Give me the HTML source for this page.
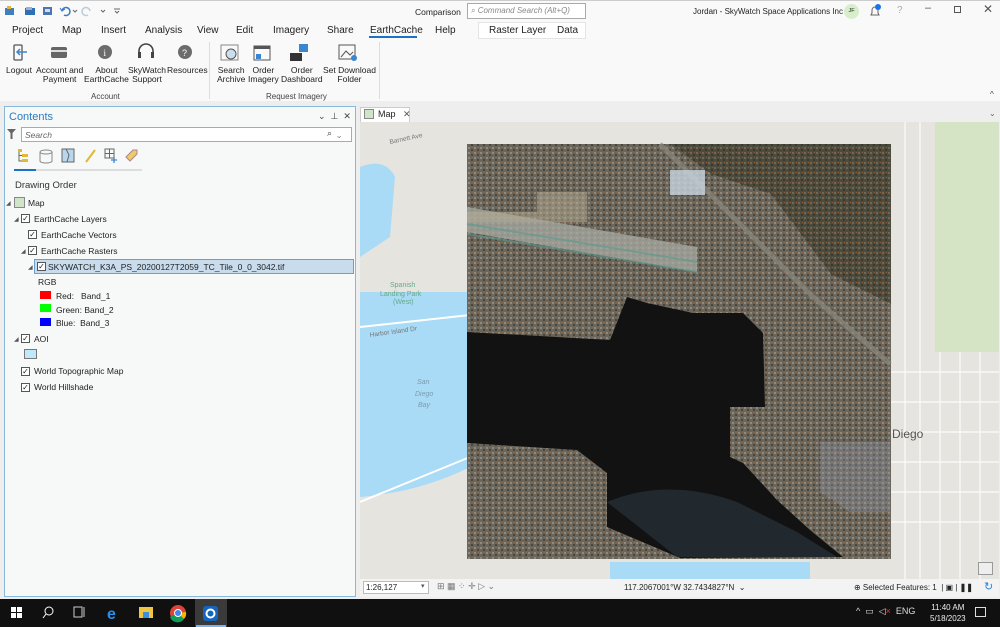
<!DOCTYPE html>
<html><head><meta charset="utf-8">
<style>
*{margin:0;padding:0;box-sizing:border-box}
body{width:1000px;height:627px;overflow:hidden;background:#eeeeee;font-family:"Liberation Sans",sans-serif;font-size:9px;color:#222;position:relative}
.a{position:absolute;white-space:nowrap}
.tab{position:absolute;top:25px;font-size:10px;color:#222}
.rb{position:absolute;top:66px;font-size:8.5px;text-align:center;line-height:9px;color:#222}
.ico{position:absolute}
.cb{position:absolute;width:9px;height:9px;border:1px solid #555;background:#fff;font-size:8px;line-height:7px;text-align:center;color:#222}
.tri{position:absolute;font-size:6px;color:#555}
.tl{position:absolute;font-size:8.5px;color:#222}
</style></head><body>
<div class="a" style="left:0;top:0;width:1000px;height:101px;background:#f9f9f9;border-top:1px solid #ccc"></div>
<svg class="ico" style="left:4px;top:5px" width="120" height="12">
<rect x="1" y="3" width="9" height="7" fill="#3d7fc1"/><rect x="3" y="1" width="4" height="3" fill="#e7b23c"/>
<rect x="21" y="3" width="10" height="7" fill="#2f6fb4"/><rect x="22" y="2" width="6" height="3" fill="#aac"/>
<rect x="39" y="2" width="9" height="8" fill="#4a76b8"/><rect x="41" y="4" width="5" height="3" fill="#ddd"/>
<path d="M58 6 a4 4 0 1 1 2 4" stroke="#3b7ac0" fill="none" stroke-width="1.5"/><path d="M56 3 l2 3 l3-2" stroke="#3b7ac0" fill="none"/>
<path d="M69 5 l2 2 l2-2" stroke="#666" fill="none"/>
<path d="M86 6 a4 4 0 1 0 -2 4" stroke="#bcd" fill="none" stroke-width="1.5"/>
<path d="M97 5 l2 2 l2-2" stroke="#666" fill="none"/>
<path d="M110 4 h6 M111 6 l2 2 l2-2" stroke="#666" fill="none"/>
</svg>
<div class="a" style="left:415px;top:7px;font-size:8.5px">Comparison</div>
<div class="a" style="left:467px;top:3px;width:119px;height:16px;border:1px solid #aaa;background:#fff"></div>
<div class="a" style="left:471px;top:6px;font-size:8px;color:#888">⌕ <i>Command Search (Alt+Q)</i></div>
<div class="a" style="left:693px;top:7px;font-size:8px">Jordan - SkyWatch Space Applications Inc</div>
<div class="a" style="left:844px;top:4px;width:15px;height:15px;border-radius:50%;background:#d6eec9;font-size:5.5px;text-align:center;line-height:15px">JF</div>
<svg class="ico" style="left:868px;top:3px" width="14" height="16"><path d="M3 12 h8 l-1-2 v-3 a3 3 0 0 0 -6 0 v3 z" fill="none" stroke="#666"/><circle cx="10" cy="4" r="3" fill="#1a73e8"/></svg>
<div class="a" style="left:897px;top:5px;color:#aaa;font-size:10px">?</div>
<div class="a" style="left:925px;top:2px;color:#555;font-size:11px">–</div>
<div class="a" style="left:954px;top:6px;width:7px;height:7px;border:1px solid #555"></div>
<div class="a" style="left:983px;top:2px;color:#555;font-size:12px">✕</div>

<div class="tab" style="left:12px">Project</div>
<div class="tab" style="left:62px">Map</div>
<div class="tab" style="left:101px">Insert</div>
<div class="tab" style="left:145px">Analysis</div>
<div class="tab" style="left:197px">View</div>
<div class="tab" style="left:236px">Edit</div>
<div class="tab" style="left:273px">Imagery</div>
<div class="tab" style="left:327px">Share</div>
<div class="tab" style="left:370px">EarthCache</div>
<div class="a" style="left:369px;top:36px;width:48px;height:2px;background:#1a73c8"></div>
<div class="tab" style="left:435px">Help</div>
<div class="a" style="left:478px;top:22px;width:108px;height:17px;background:#fff;border:1px solid #e4e4e4"></div>
<div class="tab" style="left:489px">Raster Layer</div>
<div class="tab" style="left:557px">Data</div>

<svg class="ico" style="left:0;top:42px" width="380" height="24">
<rect x="14" y="3" width="8" height="15" rx="1" fill="none" stroke="#555" stroke-width="1.3"/><path d="M27 10 h-10 m3-3 l-3 3 l3 3" stroke="#3a86d1" stroke-width="1.5" fill="none"/>
<rect x="51" y="5" width="16" height="11" rx="2" fill="#666"/><rect x="51" y="8" width="16" height="2" fill="#ddd"/>
<circle cx="105" cy="10" r="7" fill="#6c6c6c"/><text x="103.5" y="14" font-size="9" fill="#fff" font-family="Liberation Serif">i</text>
<path d="M139 13 v-4 a7 7 0 0 1 14 0 v4" stroke="#444" stroke-width="1.6" fill="none"/><rect x="138" y="10" width="3" height="6" fill="#444"/><rect x="151" y="10" width="3" height="6" fill="#444"/>
<circle cx="185" cy="10" r="7" fill="#6c6c6c"/><text x="182" y="14" font-size="9" fill="#fff">?</text>
<rect x="221" y="3" width="17" height="15" fill="none" stroke="#888"/><circle cx="231" cy="12" r="5" fill="#cde" stroke="#555"/>
<rect x="254" y="4" width="16" height="14" fill="none" stroke="#555"/><rect x="254" y="4" width="16" height="3" fill="#555"/><rect x="256" y="12" width="5" height="5" fill="#3a86d1"/>
<rect x="290" y="11" width="12" height="8" fill="#333"/><rect x="299" y="2" width="9" height="8" fill="#3a86d1"/>
<rect x="339" y="3" width="16" height="14" fill="none" stroke="#555"/><path d="M341 15 l5-6 l4 4 l3-3" stroke="#555" fill="none"/><circle cx="354" cy="16" r="3" fill="#3a86d1"/>
</svg>
<div class="rb" style="left:6px">Logout</div>
<div class="rb" style="left:36px">Account and<br>Payment</div>
<div class="rb" style="left:84px">About<br>EarthCache</div>
<div class="rb" style="left:128px">SkyWatch<br>Support</div>
<div class="rb" style="left:167px">Resources</div>
<div class="rb" style="left:217px">Search<br>Archive</div>
<div class="rb" style="left:248px">Order<br>Imagery</div>
<div class="rb" style="left:281px">Order<br>Dashboard</div>
<div class="rb" style="left:323px">Set Download<br>Folder</div>
<div class="a" style="left:91px;top:92px;font-size:8px;color:#444">Account</div>
<div class="a" style="left:266px;top:92px;font-size:8px;color:#444">Request Imagery</div>
<div class="a" style="left:209px;top:42px;width:1px;height:57px;background:#ddd"></div>
<div class="a" style="left:379px;top:42px;width:1px;height:57px;background:#ddd"></div>
<div class="a" style="left:990px;top:90px;font-size:8px;color:#444">^</div>

<div class="a" style="left:4px;top:106px;width:352px;height:491px;background:#f7f8f8;border:1px solid #8ab8dc"></div>
<div class="a" style="left:9px;top:111px;font-size:11px;color:#2a7cc2">Contents</div>
<div class="a" style="left:318px;top:111px;font-size:9px;color:#444">⌄ &nbsp;⊥ &nbsp;✕</div>
<svg class="ico" style="left:7px;top:129px" width="10" height="11"><path d="M0 0 h9 l-3.5 4 v6 h-2 v-6 z" fill="#666"/></svg>
<div class="a" style="left:21px;top:127px;width:331px;height:15px;background:#fff;border:1px solid #aaa"></div>
<div class="a" style="left:25px;top:130px;font-size:8.5px;color:#666;font-style:italic">Search</div>
<div class="a" style="left:327px;top:128px;font-size:9px;color:#444">⌕ &nbsp;⌄</div>
<svg class="ico" style="left:14px;top:147px" width="130" height="20">
<rect x="4" y="2" width="4" height="3" fill="#e2b835"/><rect x="8" y="7" width="6" height="3" fill="#e2b835"/><rect x="8" y="12" width="6" height="3" fill="#e2b835"/><path d="M5 5 v9 h3 M5 8.5 h3" stroke="#666" fill="none"/>
<ellipse cx="32" cy="5" rx="6" ry="2" fill="none" stroke="#888"/><path d="M26 5 v9 a6 2 0 0 0 12 0 v-9" fill="none" stroke="#888"/>
<rect x="48" y="2" width="12" height="13" fill="#b8d6ec" stroke="#666"/><path d="M52 2 l3 6 l-2 7" stroke="#666" fill="none"/>
<path d="M72 15 l9-12" stroke="#e2b835" stroke-width="2"/>
<path d="M91 2 h9 v9 h-9 z M95.5 2 v9 M91 6.5 h9" stroke="#666" fill="none"/><path d="M100 10 v6 M97 13 h6" stroke="#3a86d1" stroke-width="1.3"/>
<path d="M112 10 l7-7 h4 v4 l-7 7 z" fill="#f0c96a" stroke="#a88"/>
</svg>
<div class="a" style="left:14px;top:169px;width:128px;height:2px;background:#ddd"></div>
<div class="a" style="left:14px;top:169px;width:22px;height:2px;background:#1a73c8"></div>
<div class="a" style="left:15px;top:180px;font-size:9.5px;color:#333">Drawing Order</div>

<div class="tri" style="left:6px;top:200px">◢</div>
<div class="a" style="left:14px;top:197px;width:11px;height:11px;border:1px solid #888;background:#cfe4c9"></div>
<div class="tl" style="left:28px;top:198px">Map</div>
<div class="tri" style="left:14px;top:216px">◢</div><div class="cb" style="left:21px;top:214px">✓</div><div class="tl" style="left:34px;top:214px">EarthCache Layers</div>
<div class="cb" style="left:28px;top:230px">✓</div><div class="tl" style="left:41px;top:230px">EarthCache Vectors</div>
<div class="tri" style="left:21px;top:248px">◢</div><div class="cb" style="left:28px;top:246px">✓</div><div class="tl" style="left:41px;top:246px">EarthCache Rasters</div>
<div class="a" style="left:34px;top:259px;width:320px;height:15px;background:#c9dcee;border:1px solid #6a9fcf"></div>
<div class="tri" style="left:28px;top:264px">◢</div><div class="cb" style="left:37px;top:262px">✓</div><div class="tl" style="left:48px;top:262px">SKYWATCH_K3A_PS_20200127T2059_TC_Tile_0_0_3042.tif</div>
<div class="tl" style="left:38px;top:277px">RGB</div>
<div class="a" style="left:40px;top:291px;width:11px;height:8px;background:#f00"></div><div class="tl" style="left:56px;top:291px">Red:&nbsp;&nbsp; Band_1</div>
<div class="a" style="left:40px;top:304px;width:11px;height:8px;background:#0f0"></div><div class="tl" style="left:56px;top:305px">Green: Band_2</div>
<div class="a" style="left:40px;top:318px;width:11px;height:8px;background:#00f"></div><div class="tl" style="left:56px;top:318px">Blue:&nbsp; Band_3</div>
<div class="tri" style="left:14px;top:336px">◢</div><div class="cb" style="left:21px;top:334px">✓</div><div class="tl" style="left:34px;top:334px">AOI</div>
<div class="a" style="left:24px;top:349px;width:13px;height:10px;background:#bfe8fa;border:1px solid #777"></div>
<div class="cb" style="left:21px;top:367px">✓</div><div class="tl" style="left:34px;top:366px">World Topographic Map</div>
<div class="cb" style="left:21px;top:383px">✓</div><div class="tl" style="left:34px;top:382px">World Hillshade</div>

<div class="a" style="left:360px;top:107px;width:50px;height:15px;background:#fff;border:1px solid #ccc;border-bottom:none"></div>
<div class="a" style="left:364px;top:109px;width:10px;height:10px;border:1px solid #888;background:#cfe4c9"></div>
<div class="a" style="left:378px;top:109px;font-size:9px">Map&nbsp;&nbsp;&nbsp;<span style="color:#555">✕</span></div>
<div class="a" style="left:989px;top:109px;font-size:8px;color:#666">⌄</div>

<svg class="ico" style="left:360px;top:122px" width="639" height="457" viewBox="0 0 639 457">
<defs>
<pattern id="p" width="6" height="5" patternUnits="userSpaceOnUse">
<rect width="6" height="5" fill="#6a665c"/>
<rect x="0" y="0" width="2" height="2" fill="#8e8a80"/><rect x="3" y="2" width="2" height="2" fill="#4a463e"/><rect x="4" y="0" width="1" height="1" fill="#8a6a4a"/>
</pattern>
<pattern id="p2" width="6" height="5" patternUnits="userSpaceOnUse">
<rect width="6" height="5" fill="#4d4a3e"/><rect x="0" y="0" width="2" height="2" fill="#6f6858"/><rect x="3" y="2" width="2" height="2" fill="#3a3a2c"/><rect x="4" y="0" width="1" height="1" fill="#8a5a34"/>
</pattern>
</defs>
<rect width="639" height="457" fill="#e6e4df"/>
<rect x="575" y="0" width="64" height="230" fill="#d6e4c6"/>
<path d="M0 45 q25 -10 35 10 l-5 60 l-30 20 z" fill="#a9daf6"/>
<path d="M0 170 h110 v175 q-50 25 -110 30 z" fill="#a9daf6"/>
<path d="M250 440 h200 v17 h-200 z" fill="#a9daf6"/>
<path d="M0 205 l110 -12 M0 380 l110 -45" stroke="#fff" stroke-width="2"/>
<g stroke="#fff" stroke-width="1.2" opacity=".9"><path d="M545 0 v457 M560 0 v457 M580 230 v227 M600 230 v227 M620 230 v227 M531 250 h108 M531 280 h108 M531 310 h108 M531 340 h108 M531 370 h108 M531 400 h108"/></g>
<g font-size="7" fill="#6a8" font-family="Liberation Sans"><text x="30" y="165">Spanish</text><text x="20" y="174">Landing Park</text><text x="33" y="182">(West)</text></g>
<g font-size="7" fill="#7a9cb0" font-style="italic" font-family="Liberation Sans"><text x="57" y="262">San</text><text x="55" y="274">Diego</text><text x="58" y="285">Bay</text></g>
<text x="532" y="316" font-size="12" fill="#555" font-family="Liberation Sans">Diego</text>
<text x="30" y="22" font-size="6.5" fill="#777" transform="rotate(-12 30 22)">Barnett Ave</text>
<text x="10" y="215" font-size="6.5" fill="#777" transform="rotate(-8 10 215)">Harbor Island Dr</text>
<rect x="107" y="22" width="424" height="415" fill="url(#p)"/>
<path d="M310 22 h221 v160 l-60 -30 l-60 -80 l-60 -20 z" fill="url(#p2)"/>
<path d="M107 85 l230 40 v25 l-230 -40 z" fill="#a8aca4" opacity=".75"/>
<path d="M107 102 l230 38 M107 112 l230 38" stroke="#5a9a90" stroke-width="2" opacity=".6"/>
<path d="M300 22 l150 150 l80 70" stroke="#8a877e" stroke-width="5" fill="none" opacity=".7"/>
<path d="M107 210 L250 218 L267 175 L287 181 L333 191 L383 191 L403 211 L405 285 L370 285 L370 335 L383 341 L417 378 L450 408 L483 435 L320 436 L247 405 L247 351 L217 328 L107 321 Z" fill="#121212"/>
<path d="M247 380 q60 -25 130 0 l60 30 l40 25 h-160 z" fill="#27323a" opacity=".75"/>
<path d="M460 320 h70 v70 h-40 l-30 -20 z" fill="#8d95a6" opacity=".35"/>
<rect x="310" y="48" width="35" height="25" fill="#c8d4e0" opacity=".8"/>
<path d="M107 90 h70 v-20 h50 v30 h-120 z" fill="#b5ab92" opacity=".5"/>
</svg>
<div class="a" style="left:978px;top:562px;width:15px;height:13px;background:#eee;border:1px solid #999"></div>

<div class="a" style="left:360px;top:579px;width:639px;height:18px;background:#f3f3f3"></div>
<div class="a" style="left:363px;top:581px;width:66px;height:13px;background:#fff;border:1px solid #bbb"></div>
<div class="a" style="left:366px;top:583px;font-size:8px">1:26,127</div>
<div class="a" style="left:421px;top:582px;font-size:7px;color:#555">▾</div>
<div class="a" style="left:437px;top:581px;font-size:9px;color:#777">⊞ ▦ ⁘ ✛ ▷ ⌄</div>
<div class="a" style="left:624px;top:583px;font-size:8px">117.2067001°W 32.7434827°N &nbsp;⌄</div>
<div class="a" style="left:854px;top:583px;font-size:8px">⊕ Selected Features: 1 &nbsp;| ▣ | <b>❚❚</b></div>
<div class="a" style="left:984px;top:580px;font-size:11px;color:#2a85d8">↻</div>

<div class="a" style="left:0;top:599px;width:1000px;height:28px;background:#101010"></div>
<div class="a" style="left:195px;top:599px;width:32px;height:28px;background:#3a3a3a"></div>
<div class="a" style="left:196px;top:625px;width:30px;height:2px;background:#7fb2e8"></div>
<svg class="ico" style="left:0;top:599px" width="230" height="28">
<g fill="#fff"><rect x="11" y="8" width="5" height="5"/><rect x="17" y="8" width="5" height="5"/><rect x="11" y="14" width="5" height="5"/><rect x="17" y="14" width="5" height="5"/></g>
<circle cx="49" cy="12" r="4" fill="none" stroke="#fff"/><path d="M46 15 l-3 4" stroke="#fff"/>
<rect x="74" y="8" width="8" height="10" fill="none" stroke="#ccc"/><path d="M84 8 v10" stroke="#ccc"/>
<text x="107" y="20" font-size="16" fill="#2b8ee6" font-weight="bold">e</text>
<rect x="139" y="8" width="14" height="11" fill="#f0c542"/><rect x="143" y="13" width="6" height="6" fill="#3b8fdd"/>
<circle cx="178" cy="14" r="8" fill="#db4437"/><path d="M178 14 L170 18 A8 8 0 0 0 184 20 z" fill="#0f9d58"/><path d="M178 14 L184 20 A8 8 0 0 0 186 13 z" fill="#f4b400"/><circle cx="178" cy="14" r="3.5" fill="#4285f4" stroke="#fff"/>
<rect x="203" y="7" width="15" height="15" rx="3" fill="#1565c0"/><circle cx="210.5" cy="14.5" r="5" fill="#fff"/><circle cx="210.5" cy="14.5" r="3" fill="#1565c0"/>
</svg>
<div class="a" style="left:856px;top:606px;font-size:9px;color:#ddd">^ &nbsp;▭ &nbsp;◁<span style="color:#e33">×</span> &nbsp;ENG</div>
<div class="a" style="left:930px;top:602px;font-size:8px;color:#eee;text-align:center;line-height:11px">11:40 AM<br>5/18/2023</div>
<div class="a" style="left:975px;top:607px;width:11px;height:10px;border:1px solid #ddd"></div>
</body></html>
